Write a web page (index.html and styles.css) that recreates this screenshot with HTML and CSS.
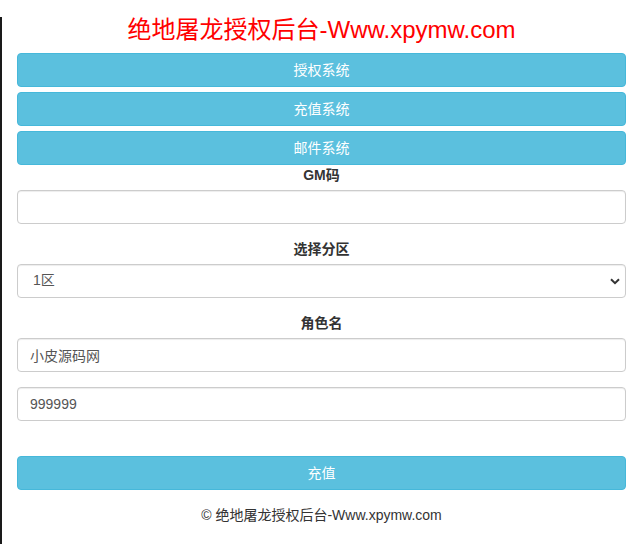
FILE: index.html
```html
<!DOCTYPE html>
<html lang="zh-CN">
<head>
<meta charset="utf-8">
<title>绝地屠龙授权后台</title>
<link rel="stylesheet" href="styles.css">
</head>
<body>
<div class="frame">
  <div class="container">
    <h3 class="title">绝地屠龙授权后台-Www.xpymw.com</h3>
    <div class="nav">
      <a class="btn btn-info" href="#">授权系统</a>
      <a class="btn btn-info" href="#">充值系统</a>
      <a class="btn btn-info" href="#">邮件系统</a>
    </div>
    <form class="form">
      <div class="form-group">
        <label class="label">GM码</label>
        <input class="form-control" type="text">
      </div>
      <div class="form-group">
        <label class="label">选择分区</label>
        <div class="select-wrap">
          <select class="form-control select">
            <option>1区</option>
          </select>
          <svg class="chevron" width="10" height="7" viewBox="0 0 10 7"><path d="M1 1.2 L5 5.2 L9 1.2" fill="none" stroke="#333" stroke-width="2"/></svg>
        </div>
      </div>
      <div class="form-group">
        <label class="label">角色名</label>
        <input class="form-control" type="text" value="小皮源码网">
      </div>
      <div class="form-group">
        <input class="form-control" type="text" value="999999">
      </div>
      <button class="btn btn-info submit" type="button">充值</button>
    </form>
    <p class="footer">© 绝地屠龙授权后台-Www.xpymw.com</p>
  </div>
</div>
</body>
</html>
```

FILE: styles.css
```css
html, body {
  margin: 0;
  padding: 0;
  background: #fff;
}
body {
  font-family: "Liberation Sans", Arial, "Noto Sans CJK SC", sans-serif;
  font-size: 14px;
  line-height: 1.42857;
  color: #333;
}
.frame {
  border-left: 2px solid #1a1a1a;
  min-height: 544px;
  box-sizing: border-box;
}
.container {
  padding: 0 16px 0 15px;
}
.title {
  margin: 17px 0 10px;
  font-size: 24px;
  font-weight: normal;
  line-height: 1.1;
  color: #f00;
  text-align: center;
}
.nav {
  display: flex;
  flex-direction: column;
  gap: 5px;
}
.btn {
  display: block;
  box-sizing: border-box;
  width: 100%;
  height: 34px;
  padding: 7px 12px 5px;
  font-family: inherit;
  font-size: 14px;
  line-height: 1.42857;
  text-align: center;
  text-decoration: none;
  border-radius: 4px;
  border: 1px solid transparent;
  cursor: pointer;
}
.btn-info {
  color: #fff;
  background: #5bc0de;
  border-color: #46b8da;
}
.form {
  text-align: center;
}
.form-group {
  margin-bottom: 15px;
}
.label {
  display: block;
  font-weight: bold;
  padding-top: 1px;
  margin-bottom: 4px;
}
.form-control {
  display: block;
  box-sizing: border-box;
  width: 100%;
  height: 34px;
  padding: 6px 12px;
  font-family: inherit;
  font-size: 14px;
  line-height: 1.42857;
  color: #555;
  background: #fff;
  border: 1px solid #ccc;
  border-radius: 4px;
  box-shadow: inset 0 1px 1px rgba(0,0,0,.075);
  text-align: left;
}
.select-wrap {
  position: relative;
}
.select {
  appearance: none;
  -webkit-appearance: none;
  padding-left: 15px;
}
.chevron {
  position: absolute;
  right: 6px;
  top: 14px;
  pointer-events: none;
}
.submit {
  margin-top: 35px;
}
.footer {
  margin: 15px 0 0;
  padding-top: 1px;
  text-align: center;
  color: #333;
}
```
